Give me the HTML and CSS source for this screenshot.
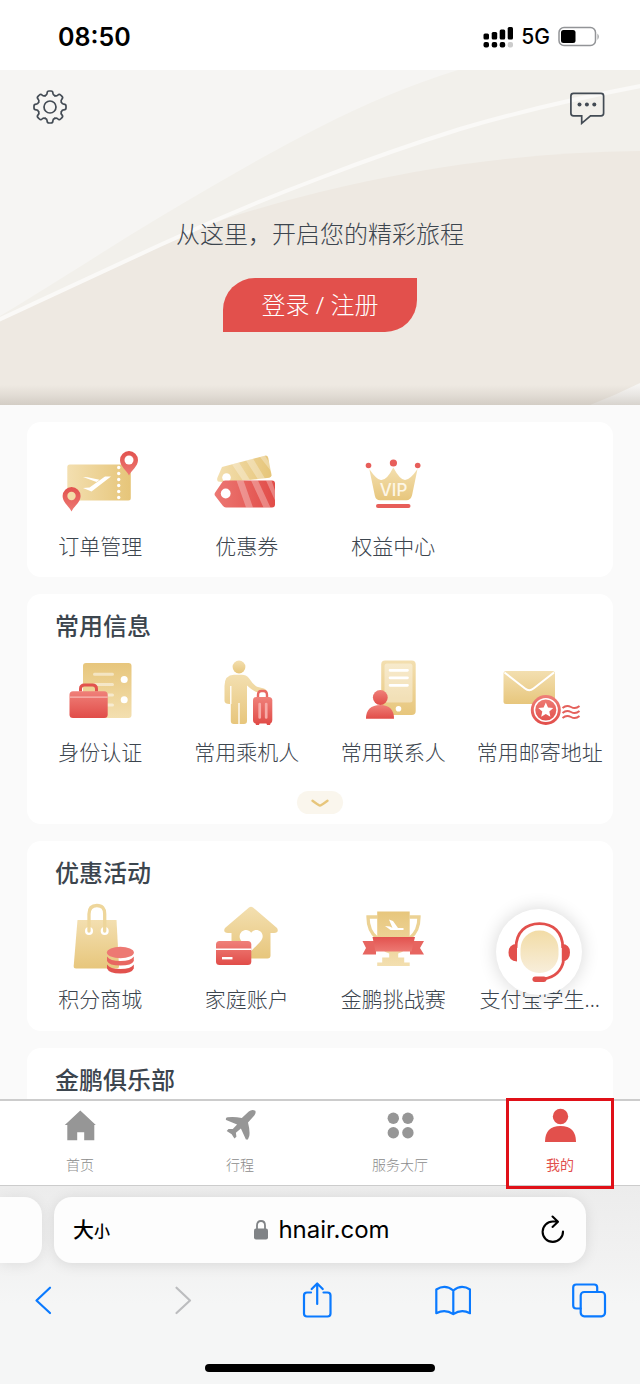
FILE: index.html
```html
<!DOCTYPE html>
<html lang="zh-CN">
<head>
<meta charset="utf-8">
<meta name="viewport" content="width=device-width, initial-scale=1">
<title>我的</title>
<link rel="stylesheet" href="styles.css">
</head>
<body>
<svg class="defs" width="0" height="0" aria-hidden="true">
  <defs>
    <linearGradient id="goldDown" x1="0" y1="0" x2="0" y2="1"><stop offset="0" stop-color="#f3dfb0"/><stop offset="1" stop-color="#e7c67c"/></linearGradient>
    <linearGradient id="goldUp" x1="0" y1="0" x2="0" y2="1"><stop offset="0" stop-color="#e7c67c"/><stop offset="1" stop-color="#f3dfb0"/></linearGradient>
    <linearGradient id="goldRight" x1="0" y1="0" x2="1" y2="0"><stop offset="0" stop-color="#f3dfb0"/><stop offset="1" stop-color="#e6c579"/></linearGradient>
    <linearGradient id="redDown" x1="0" y1="0" x2="0" y2="1"><stop offset="0" stop-color="#ef8079"/><stop offset="1" stop-color="#e14d49"/></linearGradient>
    <linearGradient id="redUp" x1="0" y1="0" x2="0" y2="1"><stop offset="0" stop-color="#e2524e"/><stop offset="1" stop-color="#ed7973"/></linearGradient>
    <linearGradient id="redRight" x1="0" y1="0" x2="1" y2="0"><stop offset="0" stop-color="#ec7873"/><stop offset="1" stop-color="#e14c48"/></linearGradient>
    <linearGradient id="face" x1="0" y1="0" x2="0" y2="1"><stop offset="0" stop-color="#f2dca6"/><stop offset="1" stop-color="#f8eedb"/></linearGradient>
    <path id="tooth" d="M-4.700-11.400Q-2.900-12.100-2.900-13.700Q-2.900-16-1-16H1Q2.900-16 2.900-13.700Q2.900-12.100 4.700-11.400"/>
  </defs>
</svg>

<header class="status">
  <time class="status-time">08:50</time>
  <div class="status-right">
    <svg width="30" height="22" viewBox="484 25 30 22" aria-hidden="true">
      <g fill="#000"><rect x="484.500" y="32.500" width="5.500" height="6" rx="1.500"/><rect x="492.700" y="31" width="5.500" height="7.500" rx="1.500"/><rect x="500.700" y="28.500" width="5.500" height="10" rx="1.500"/><rect x="508.700" y="26" width="5.300" height="12.500" rx="1.500"/><rect x="484.500" y="41" width="5.500" height="5.500" rx="2"/><rect x="492.700" y="41" width="5.500" height="5.500" rx="2"/><rect x="500.700" y="41" width="5.500" height="5.500" rx="2"/></g>
      <rect x="508.700" y="41" width="5.300" height="5.500" rx="2" fill="#ccc"/>
    </svg>
    <span class="status-net">5G</span>
    <svg width="42" height="22" viewBox="558 26 42 22" aria-hidden="true">
      <rect x="559" y="27.500" width="36.500" height="18" rx="5" fill="none" stroke="#929497" stroke-width="1.500"/>
      <rect x="561" y="30" width="14.500" height="13" rx="2.500"/>
      <path d="M597.500 33.500q2.500 3 0 6.500z" fill="#929497"/>
    </svg>
  </div>
</header>

<section class="hero">
  <svg class="hero-bg" viewBox="0 70 640 335" preserveAspectRatio="none" aria-hidden="true">
    <path d="M0 316C60 280 110 247 160 217C210 187 265 155 320 127C365 104 410 85 458 70H640V405H0z" fill="#f2f0eb"/>
    <path d="M0 320L160 245L225 219C255 209 288 200 320 192C430 165 535 152 640 151V405H0z" fill="#eee9e2"/>
    <path d="M-6 322L160 245Q240 208 320 178Q390 151 460 129Q545 104 646 85" fill="none" stroke="#faf9f7" stroke-width="4"/>
    <path d="M640 383Q616 395 590 405H640z" fill="#f6f5f3"/>
  </svg>
  <div class="hero-tools">
    <button class="icon-btn" type="button" aria-label="设置">
      <svg width="36" height="36" viewBox="-18 -18 36 36" fill="none" stroke="#434b54" stroke-width="1.700" stroke-linecap="round">
        <use href="#tooth"/><use href="#tooth" transform="rotate(45)"/><use href="#tooth" transform="rotate(90)"/><use href="#tooth" transform="rotate(135)"/><use href="#tooth" transform="rotate(180)"/><use href="#tooth" transform="rotate(225)"/><use href="#tooth" transform="rotate(270)"/><use href="#tooth" transform="rotate(315)"/>
        <circle r="6"/>
      </svg>
    </button>
    <button class="icon-btn" type="button" aria-label="消息">
      <svg width="38" height="36" viewBox="570 90 38 36" fill="none" stroke="#434b54" stroke-width="1.700">
        <path d="M573.500 94.300h27.500q2.600 0 2.600 2.600v17.300q0 2.600-2.600 2.600h-10.500l-8.800 7.500v-7.500H573.500q-2.600 0-2.600-2.600V96.900Q570.900 94.300 573.500 94.300z"/>
        <g fill="#434b54" stroke="none"><circle cx="579.500" cy="105.500" r="2"/><circle cx="586.900" cy="105.500" r="2"/><circle cx="594.300" cy="105.500" r="2"/></g>
      </svg>
    </button>
  </div>
  <p class="hero-text">从这里，开启您的精彩旅程</p>
  <button class="login" type="button">登录 / 注册</button>
</section>

<main class="content">
  <section class="card card-plain">
    <div class="grid">
      <a class="item" href="#orders">
        <svg class="item-icon" viewBox="58 450 84 72" aria-hidden="true">
          <rect x="67.300" y="464.500" width="63.500" height="36" rx="2.500" fill="url(#goldRight)"/>
          <g fill="#fff"><circle cx="118.700" cy="467.500" r="1.700"/><circle cx="118.700" cy="473.500" r="1.700"/><circle cx="118.700" cy="479.500" r="1.700"/><circle cx="118.700" cy="485.500" r="1.700"/><circle cx="118.700" cy="491.500" r="1.700"/><circle cx="118.700" cy="497.500" r="1.700"/>
          <path d="M83 477l4.500.2 12 2.600-3 2.200zM83 488l6.500-.5L105 476.500h6L91.500 491.500z"/></g>
          <path d="M71.500 511.500C69 506 62.600 502.500 62.600 496a9 9 0 0 1 18 0C80.600 502.500 74 506 71.500 511.500z" fill="url(#redUp)"/><circle cx="71.500" cy="496" r="4.200" fill="#f3dda8"/>
          <path d="M129 475.500C126.500 470 120 466.500 120 460a9 9 0 0 1 18 0C138 466.500 131.500 470 129 475.500z" fill="url(#redUp)"/><circle cx="129" cy="460" r="4.500" fill="#fff"/>
        </svg>
        <span class="item-label">订单管理</span>
      </a>
      <a class="item" href="#coupons">
        <svg class="item-icon" viewBox="205 450 84 72" aria-hidden="true">
          <path d="M222 467l43-11.300q2.500-.5 3.200 2l3.300 17q.4 2.500-2.200 3.100L226 482.500l-8-1q-1.500-1.500-.5-4z" fill="url(#goldRight)"/>
          <path d="M232 464.500l7-2 11 17.500-7 .8zM246 460.500l7-2 12 20-7 .9zM260 457l5-1.300 6 9.500.9 7z" fill="#fff" opacity=".3"/>
          <circle cx="226.500" cy="477.500" r="4.300" fill="#fff"/>
          <path d="M225 480.500h47q3 0 3 3v21q0 3-3 3h-46q-2 0-3.200-1.800l-7.500-9.700q-1.500-1.800 0-3.800l6.700-9.700q1-2 3-2z" fill="url(#redRight)"/>
          <path d="M236.500 480.500h7l9.500 27h-7zM251 480.500h7l12.500 27h-7zM266 480.500h5.500l3.500 10v10z" fill="#fff" opacity=".3"/>
          <circle cx="225.700" cy="493.500" r="4.900" fill="#fff"/>
        </svg>
        <span class="item-label">优惠券</span>
      </a>
      <a class="item" href="#benefits">
        <svg class="item-icon" viewBox="351 450 84 72" aria-hidden="true">
          <path d="M369.300 469Q377.500 481 381.500 480Q387 480 393.300 467.500Q400 480 405 480Q410 480 417.500 469L412 495.500Q410.500 500.300 406.500 500.300H380Q375.800 500.300 374.800 495.500z" fill="url(#goldDown)"/>
          <text class="vip" x="393.500" y="495.500" text-anchor="middle">VIP</text>
          <g fill="#e75e5a"><circle cx="368.500" cy="465.500" r="2.800"/><circle cx="393.400" cy="463" r="3.600"/><circle cx="417.700" cy="465.500" r="2.800"/><rect x="376" y="504" width="34.500" height="4" rx="2"/></g>
        </svg>
        <span class="item-label">权益中心</span>
      </a>
    </div>
  </section>

  <section class="card card-more">
    <h2 class="card-title">常用信息</h2>
    <div class="grid">
      <a class="item" href="#identity">
        <svg class="item-icon" viewBox="58 656 84 72" aria-hidden="true">
          <rect x="83" y="663" width="48.500" height="55" rx="3" fill="url(#goldUp)"/>
          <g stroke="#fff" stroke-width="3" stroke-linecap="round" opacity=".5"><path d="M94.500 674.300h18M94.500 684.500h18M96 695h16.500M96 705h16.500"/></g>
          <circle cx="124.200" cy="679.500" r="3.500" fill="#fff"/><circle cx="124.200" cy="699.800" r="3.500" fill="#fff"/>
          <path d="M80.500 691.500v-2.500q0-4 4-4h8q4 0 4 4v2.500" fill="none" stroke="#e2524e" stroke-width="3"/>
          <rect x="69.500" y="691.300" width="38.200" height="26.700" rx="3.500" fill="url(#redDown)"/>
          <path d="M69.500 697.200h38.200" stroke="#f8bab5" stroke-width="1.300"/>
        </svg>
        <span class="item-label">身份认证</span>
      </a>
      <a class="item" href="#passengers">
        <svg class="item-icon" viewBox="205 656 84 72" aria-hidden="true">
          <circle cx="239" cy="667" r="6.400" fill="url(#goldDown)"/>
          <path d="M234 674.800H242Q246 674.800 248.800 678Q253 684.500 257 686.800L264 688.500Q268 690.500 266 692H256Q250.500 689 247 685.500V721q0 3-3 3H233.800q-3 0-3-3V704q-6 .5-6.300-3V686Q224.500 675 234 674.800z" fill="url(#goldDown)"/>
          <path d="M239 703v21M230.800 686v18" stroke="#fff" stroke-width="1.300"/>
          <path d="M258 697v-2q0-4 3.500-4h2q3.500 0 3.500 4v2" fill="none" stroke="#e86862" stroke-width="2.400"/>
          <rect x="253" y="697" width="19.300" height="26.500" rx="3.500" fill="url(#redDown)"/><path d="M255 722h5l-1 3h-3zM266 722h5l-1 3h-3z" fill="#e14d49"/>
          <path d="M259.700 704v13.500M266.200 704v13.500" stroke="#f7aaa6" stroke-width="2.700" stroke-linecap="round"/>
        </svg>
        <span class="item-label">常用乘机人</span>
      </a>
      <a class="item" href="#contacts">
        <svg class="item-icon" viewBox="351 656 84 72" aria-hidden="true">
          <rect x="381.200" y="660.500" width="34.500" height="54.500" rx="4" fill="url(#goldDown)"/>
          <rect x="384.500" y="663.500" width="28" height="39" rx="2.500" fill="#fff" opacity=".38"/>
          <path d="M390 670.300h17.500M390 677.800h17.500M390 685.300h17.500" stroke="#fff" stroke-width="2.700" stroke-linecap="round"/>
          <circle cx="398.500" cy="708.800" r="2.800" fill="#fff"/>
          <circle cx="380.300" cy="697.500" r="7.400" fill="url(#redDown)"/><path d="M366 718.700q0-13.500 14.300-13.700q13.700.2 13.700 13.700z" fill="url(#redDown)"/>
        </svg>
        <span class="item-label">常用联系人</span>
      </a>
      <a class="item" href="#addresses">
        <svg class="item-icon" viewBox="498 656 84 72" aria-hidden="true">
          <rect x="503.500" y="671" width="51.500" height="33" rx="2.500" fill="url(#goldDown)"/>
          <path d="M504.500 672.500L525 688.500Q529.200 692 533.500 688.500L554 672.500" fill="none" stroke="#fff" stroke-width="2"/>
          <circle cx="545.800" cy="710" r="15" fill="url(#redDown)"/><circle cx="545.800" cy="710" r="11.300" fill="none" stroke="#fff" stroke-width="1.500"/>
          <path d="M545.800 702.500l2.200 4.900 5.300.6-4 3.600 1.100 5.200-4.600-2.700-4.600 2.700 1.100-5.200-4-3.600 5.300-.6z" fill="#fff"/>
          <path d="M562.500 708q4-3.500 8.500-1t8.500-1M562.500 713q4-3.500 8.500-1t8.500-1M562.500 718q4-3.500 8.500-1t8.500-1" fill="none" stroke="#e4605b" stroke-width="1.900"/>
        </svg>
        <span class="item-label">常用邮寄地址</span>
      </a>
    </div>
    <button class="more" type="button" aria-label="展开">
      <svg width="20" height="10" viewBox="-10 -5 20 10" fill="none" stroke="#e7c67c" stroke-width="2.400" stroke-linecap="round"><path d="M-7.500-2.200Q-1 2.600 0 2.600T7.500-2.200"/></svg>
    </button>
  </section>

  <section class="card">
    <h2 class="card-title">优惠活动</h2>
    <div class="grid">
      <a class="item" href="#mall">
        <svg class="item-icon" viewBox="58 903 84 72" aria-hidden="true">
          <path d="M77.500 920h39l2.500 46.500q0 2-2 2H76q-2.500 0-2.300-2.500z" fill="url(#goldDown)"/>
          <circle cx="89" cy="931" r="4" fill="#fff"/><circle cx="104.700" cy="931" r="4" fill="#fff"/>
          <path d="M89 931v-17q0-8.500 7.900-8.500t7.800 8.500v17" fill="none" stroke="#eed69b" stroke-width="3.300" stroke-linecap="round"/>
          <ellipse cx="120.400" cy="952.500" rx="13.500" ry="5.800" fill="#ed7973"/>
          <path d="M107 956.500q3 4.500 13.400 4.500t13.400-4.500v4.500q-2 4.500-13.400 4.500T107 961z" fill="#e86661"/>
          <path d="M107 964.500q3 4.500 13.400 4.500t13.400-4.500v4q-2 5-13.400 5T107 968.500z" fill="#e2524e"/>
        </svg>
        <span class="item-label">积分商城</span>
      </a>
      <a class="item" href="#family">
        <svg class="item-icon" viewBox="205 903 84 72" aria-hidden="true">
          <path d="M249 907.500q2-1.500 4 0l24 20.500q2.500 4.500-3 5h-3.500v22.500q0 3-3 3h-33q-3 0-3-3V933h-3.500q-5.500-.5-3-5z" fill="url(#goldDown)"/>
          <path d="M251.200 932.800C254 929 258 929.500 260.500 931.500C263.500 934.500 263.500 938.500 260 942L251.200 951L242.500 942C238.500 938.500 239 934.500 241.800 931.500C244.500 929.500 248.500 929 251.200 932.800z" fill="#fff"/>
          <rect x="216" y="941" width="35.300" height="24" rx="3.500" fill="url(#redDown)"/><path d="M216 949.300h35.300" stroke="#fff" stroke-width="1.400"/><path d="M222 958.200h10.500" stroke="#fff" stroke-width="2.400"/>
        </svg>
        <span class="item-label">家庭账户</span>
      </a>
      <a class="item" href="#challenge">
        <svg class="item-icon" viewBox="351 903 84 72" aria-hidden="true">
          <path d="M377.500 917H368q0 14 9 21M409.500 917h9.500q0 14-9 21" fill="none" stroke="#ecd294" stroke-width="3.300"/>
          <path d="M377.200 911.500h32.500V938q-3 14-11.500 15.500v4h6v5h5.500v3.500h-32.500V962.500h5v-5h7v-4q-9-2-12-15.500z" fill="url(#goldUp)"/>
          <path d="M389 919.500l4 1.500 5 7h5.500v2h-13l-5.500-4 5 .5 2.500 1.500z" fill="#fff"/>
          <path d="M362.500 941H376v13.500h-13.500l3.500-6.500zM424 941H410v13.500h14L420 948z" fill="#e76560"/>
          <path d="M372.500 937h42.500l-3.500 14.500h-36z" fill="url(#redUp)"/>
        </svg>
        <span class="item-label">金鹏挑战赛</span>
      </a>
      <a class="item" href="#student">
        <svg class="item-icon" viewBox="498 903 84 72" aria-hidden="true"></svg>
        <span class="item-label">支付宝学生...</span>
      </a>
    </div>
    <button class="service" type="button" aria-label="在线客服">
      <svg width="86" height="86" viewBox="496 909 86 86" aria-hidden="true">
        <rect x="520.500" y="930.500" width="38" height="42.500" rx="18.500" fill="url(#face)"/>
        <path d="M516 948C516 932 526 923.700 539.500 923.700S562.800 932 562.800 948M563.500 961q-3 15-19.500 18" fill="none" stroke="#e2504c" stroke-width="2.800"/>
        <path d="M517 944v17.500q-8.500-.5-8.500-9t8.500-8.500zM561.800 944v17.500q8.200-.5 8.200-9t-8.200-8.500z" fill="#e2504c"/>
        <rect x="532.500" y="976.500" width="14" height="5.500" rx="2.700" fill="#e2504c"/>
      </svg>
    </button>
  </section>

  <section class="card">
    <h2 class="card-title">金鹏俱乐部</h2>
  </section>
</main>

<nav class="tabs">
  <a class="tab" href="#home">
    <svg width="36" height="36" viewBox="62 1108 36 36" fill="#969696" aria-hidden="true"><path d="M80.300 1110.500l15.500 14.500h-1.500v15.300H84.200v-8H77.200v8H67.300V1125h-2.500z"/></svg>
    <span>首页</span>
  </a>
  <a class="tab" href="#trips">
    <svg width="36" height="36" viewBox="222 1108 36 36" fill="#969696" aria-hidden="true"><path d="M255.300 1110.800q1 2.200-1 4.600l-6.300 7q2.200 8.500 1.300 13.500l-1.400 3.500-2 .1-5-11-5 4.300.5 4-2 1.700-2.700-4.300-5-3.300 1.800-2 4.300.2 4.300-4.500-11-4.600q-1-2.200 1.500-2.700 6.500-1 14.200.8l7-6.500q3-2.600 6.500-.8z"/></svg>
    <span>行程</span>
  </a>
  <a class="tab" href="#services">
    <svg width="36" height="36" viewBox="382 1108 36 36" fill="#969696" aria-hidden="true"><circle cx="393.300" cy="1118.200" r="5.700"/><circle cx="407.900" cy="1118.200" r="5.700"/><circle cx="393.300" cy="1132.700" r="5.700"/><circle cx="407.900" cy="1132.700" r="5.700"/></svg>
    <span>服务大厅</span>
  </a>
  <a class="tab tab-active" href="#mine" aria-current="page">
    <svg width="36" height="36" viewBox="542 1108 36 36" fill="#e2504c" aria-hidden="true"><circle cx="560.500" cy="1116.500" r="7.700"/><path d="M545 1142q0-16 15.500-16T576 1142z"/></svg>
    <span>我的</span>
  </a>
</nav>

<footer class="browser">
  <div class="address-row">
    <div class="prev-page"></div>
    <div class="address">
      <button class="text-size" type="button">大<small>小</small></button>
      <button class="domain" type="button">
        <svg width="16" height="22" viewBox="0 0 16 22" aria-hidden="true"><path d="M4 10V6.500q0-4.500 4-4.500t4 4.500V10" fill="none" stroke="#808386" stroke-width="1.800"/><rect x="1" y="9.500" width="14" height="11" rx="2" fill="#808386"/></svg>
        hnair.com
      </button>
      <button class="reload" type="button" aria-label="刷新">
        <svg width="26" height="30" viewBox="540 1215 26 30" fill="none" stroke="#000" stroke-width="2.100" stroke-linecap="round" stroke-linejoin="round" aria-hidden="true"><path d="M563 1231.500A10.200 10.200 0 1 1 553 1221.500h4.500M552.500 1216.500l5.500 5.200-5.500 5.200"/></svg>
      </button>
    </div>
    <div class="next-space"></div>
  </div>
  <div class="toolbar">
    <button class="tool" type="button" aria-label="后退"><svg viewBox="25 1282 36 36"><path d="M50 1287.700L36.500 1300.500L50 1313"/></svg></button>
    <button class="tool tool-off" type="button" aria-label="前进" disabled><svg viewBox="162 1282 36 36"><path d="M176.500 1287.700L190 1300.500L176.500 1313"/></svg></button>
    <button class="tool" type="button" aria-label="分享"><svg viewBox="298 1282 36 36"><path d="M311 1292.500h-4q-3 0-3 3v18q0 3 3 3h20.500q3 0 3-3v-18q0-3-3-3h-4M317.200 1304v-20.500M311.700 1289l5.500-5.500 5.500 5.500"/></svg></button>
    <button class="tool" type="button" aria-label="书签"><svg viewBox="435 1282 36 36"><path d="M453.300 1290.500q-8-6.500-17-1v23.700q9-4.500 17 1 8-5.500 16.700-1v-23.700q-8.700-5.500-16.700 1zv23.700"/></svg></button>
    <button class="tool" type="button" aria-label="标签页"><svg viewBox="571 1282 36 36"><path d="M580.700 1308.500h-4.500q-3 0-3-3v-18q0-3 3-3h18q3 0 3 3v4.500"/><rect x="580.700" y="1292" width="24.300" height="24.300" rx="3.500"/></svg></button>
  </div>
  <div class="home-bar"></div>
</footer>
</body>
</html>
```

FILE: styles.css
```css
* { box-sizing: border-box; }

body {
  margin: 0;
  height: 100vh;
  display: flex;
  flex-direction: column;
  overflow: hidden;
  background: #fff;
  color: #3c454e;
  font-family: Inter, "Noto Sans CJK SC", sans-serif;
}

button {
  margin: 0;
  padding: 0;
  border: 0;
  background: none;
  color: inherit;
  font: inherit;
}

a { color: inherit; text-decoration: none; }
svg { display: block; flex: none; }
.defs { position: absolute; }

.status {
  flex: none;
  height: 70px;
  padding: 4px 40px 0 58px;
  display: flex;
  align-items: center;
  justify-content: space-between;
  color: #000;
}
.status-time { font-size: 25px; line-height: 32px; font-weight: 600; }
.status-right { display: flex; align-items: center; gap: 8px; }
.status-net { font-size: 21px; line-height: 26px; font-weight: 500; }

.hero {
  position: relative;
  flex: none;
  display: flex;
  flex-direction: column;
  align-items: center;
  padding: 19px 32px 73px;
  background: #f6f5f3;
}
.hero::after {
  content: "";
  position: absolute;
  inset: auto 0 0;
  height: 20px;
  background: linear-gradient(rgba(178, 170, 160, 0), rgba(178, 170, 160, .2) 50%, rgba(178, 170, 160, .45));
}
.hero-bg { position: absolute; inset: 0; width: 100%; height: 100%; }
.hero-tools { position: relative; align-self: stretch; display: flex; justify-content: space-between; }
.hero-text {
  position: relative;
  margin: 90px 0 27px;
  font-family: "Noto Sans CJK SC", sans-serif;
  font-size: 24px;
  line-height: 36px;
  font-weight: 300;
}
.login {
  position: relative;
  padding: 9px 39px;
  border-radius: 32px 0;
  background: #e2504c;
  color: #fff;
  font-family: "Noto Sans", "Noto Sans CJK SC", sans-serif;
  font-size: 24px;
  line-height: 36px;
  font-weight: 300;
}

.content {
  flex: 1;
  min-height: 0;
  overflow: hidden;
  display: flex;
  flex-direction: column;
  gap: 17px;
  padding: 17px 27px 0;
  background: #fafafa;
  font-family: "Noto Sans", "Noto Sans CJK SC", sans-serif;
}
.card {
  position: relative;
  flex: none;
  display: flex;
  flex-direction: column;
  padding: 13px 0 17px;
  border-radius: 14px;
  background: #fff;
}
.card-plain { padding: 28px 0 16px; }
.card-more { padding-bottom: 10px; }
.card-title { margin: 0 0 13px; padding: 0 28px; font-size: 24px; line-height: 36px; font-weight: 500; font-family: "Noto Sans CJK SC", sans-serif; }
.grid { display: grid; grid-template-columns: repeat(4, 1fr); }
.item { display: flex; flex-direction: column; align-items: center; gap: 9px; min-width: 0; }
.item-icon { width: 84px; height: 72px; }
.item-label { font-size: 21px; line-height: 30px; font-weight: 300; white-space: nowrap; }
.vip { font-family: Inter, sans-serif; font-size: 17px; font-weight: 500; fill: #fdf6e6; }
.more {
  align-self: center;
  display: flex;
  align-items: center;
  justify-content: center;
  width: 46px;
  height: 23px;
  margin-top: 24px;
  border-radius: 12px;
  background: #faf6ed;
}
.service {
  position: absolute;
  right: 31px;
  top: 68px;
  border-radius: 50%;
  background: #fff;
  box-shadow: 0 0 18px rgba(0, 0, 0, .16);
}

.tabs {
  position: relative;
  z-index: 1;
  flex: none;
  display: grid;
  grid-template-columns: repeat(4, 1fr);
  border-top: 2px solid #ccc;
  border-bottom: 1px solid #ccc;
  background: #fff;
}
.tab {
  position: relative;
  display: flex;
  flex-direction: column;
  align-items: center;
  gap: 10px;
  padding: 7px 0 11px;
  color: #8c8c8c;
  font-family: "Noto Sans CJK SC", sans-serif;
  font-size: 14px;
  line-height: 20px;
  font-weight: 300;
}
.tab-active { color: #e2504c; font-weight: 400; }
.tab-active::after {
  content: "";
  position: absolute;
  inset: -3px 26px -4px 26px;
  border: 3px solid #e01018;
}

.browser {
  flex: none;
  background: linear-gradient(#ececec, #f1f1f1 35%, #f5f6f6 60%);
  padding: 11px 0 12px;
}
.address-row { display: flex; gap: 12px; }
.prev-page { width: 42px; border-radius: 0 18px 18px 0; background: #fdfdfd; box-shadow: 0 2px 14px rgba(0, 0, 0, .08); }
.next-space { width: 42px; }
.address {
  flex: 1;
  display: flex;
  align-items: center;
  justify-content: space-between;
  padding: 15px 20px 15px 19px;
  border-radius: 18px;
  background: #fdfdfd;
  box-shadow: 0 2px 14px rgba(0, 0, 0, .1);
  color: #000;
}
.text-size { font-size: 21px; line-height: 32px; font-weight: 500; }
.text-size small { font-size: 16px; }
.domain { display: flex; align-items: center; gap: 9px; padding-right: 7px; font-size: 24px; line-height: 36px; }

.toolbar { display: flex; justify-content: space-between; padding: 19px 33px 0 25px; }
.tool { width: 36px; height: 36px; color: #0a7aff; }
.tool svg { width: 36px; height: 36px; fill: none; stroke: currentColor; stroke-width: 2.2px; stroke-linecap: round; stroke-linejoin: round; }
.tool-off { color: #bcbdbf; }
.home-bar { width: 36%; height: 8px; margin: 46px auto 0; border-radius: 4px; background: #000; }
```
